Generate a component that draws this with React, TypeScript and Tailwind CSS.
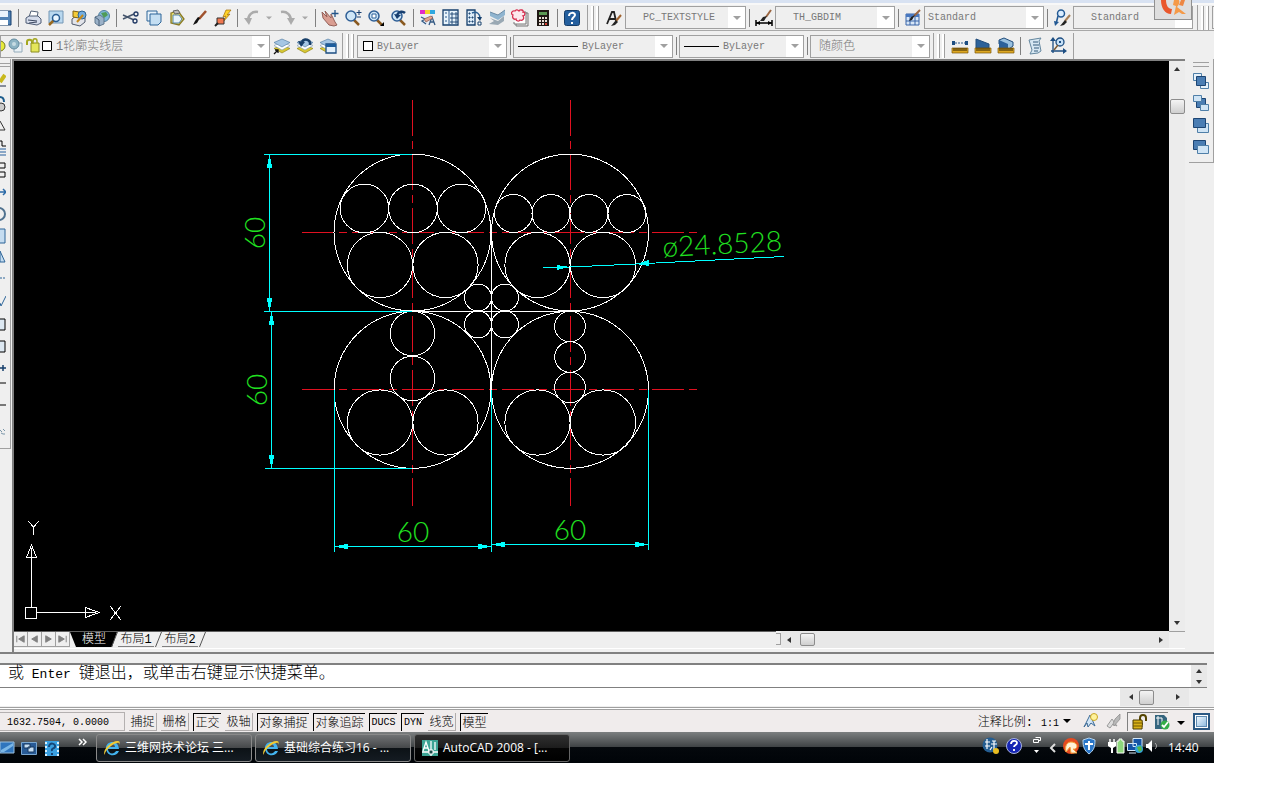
import type { ReactNode } from 'react';
import clsx from 'clsx';

const UI_FONT = "font-['Liberation_Mono','Noto_Sans_CJK_SC',monospace]";

function Glyph({ children }: { children: ReactNode }) {
    return (
        <svg width="18" height="18" viewBox="0 0 18 18" fill="none" className="shrink-0">
            {children}
        </svg>
    );
}

function ToolButton({ label, children }: { label: string; children: ReactNode }) {
    return (
        <button type="button" aria-label={label} className="flex h-6 w-[23px] shrink-0 items-center justify-center">
            <Glyph>{children}</Glyph>
        </button>
    );
}

function Separator() {
    return (
        <div className="flex w-1.5 shrink-0 justify-center">
            <div className="h-[18px] w-px bg-[#808080]" />
        </div>
    );
}

function Grip() {
    return (
        <div className="flex h-6 shrink-0 gap-0.5 px-[3px]">
            <div className="w-[3px] border-r border-[#a0a0a0] bg-white" />
            <div className="w-[3px] border-r border-[#a0a0a0] bg-white" />
        </div>
    );
}

function DownArrow({ className }: { className?: string }) {
    return (
        <svg width="8" height="4" viewBox="0 0 8 4" className={className}>
            <path d="M0 0h8L4 4z" fill="currentColor" />
        </svg>
    );
}

interface ComboProps {
    label: string;
    value: string;
    width: string;
    cjk?: boolean;
    pad?: string;
    children?: ReactNode;
}

function Combo({ label, value, width, cjk, pad = 'pl-1', children }: ComboProps) {
    return (
        <div className={clsx('flex h-[23px] shrink-0 items-center border border-[#a0a0a0] bg-[#efefef]', width)}>
            {children}
            <select
                aria-label={label}
                defaultValue={value}
                className={clsx(
                    'h-full min-w-0 flex-1 appearance-none bg-transparent text-[#787878] outline-none',
                    cjk ? 'pt-0.5 text-[12px] font-light' : 'text-[10px]',
                    pad
                )}
            >
                <option>{value}</option>
            </select>
            <div className="flex h-full w-[17px] items-center justify-center bg-white text-[#a0a0a0]">
                <DownArrow />
            </div>
        </div>
    );
}

function Magnifier() {
    return (
        <>
            <path d="M9 10l6 6" stroke="#8a5a20" strokeWidth="2.5" />
            <circle cx="7" cy="7" r="5" fill="#cfe6f7" stroke="#2f5f96" strokeWidth="1.5" />
        </>
    );
}

function Brush() {
    return (
        <>
            <path d="M8 10l7-8" stroke="#a0522d" strokeWidth="2.5" />
            <path d="M9 9l-3 5-4 2 2-4 3-4z" fill="#111" />
        </>
    );
}

function Layers() {
    return (
        <>
            <path d="M9 8l8 3.500L9 16l-8-4.500z" fill="#d8c832" stroke="#8a7a10" strokeWidth=".6" />
            <path d="M9 5l8 3.500L9 13 1 8.500z" fill="#fff" stroke="#7e9ab4" strokeWidth=".6" />
            <path d="M9 2l8 3.500L9 10 1 5.500z" fill="#a5c6e4" stroke="#48739c" strokeWidth=".6" />
        </>
    );
}

function StandardToolbar() {
    return (
        <div className="flex h-[26px] items-center overflow-hidden border-b border-[#a8a8a8]">
            <div className="-ml-2 flex shrink-0">
                <ToolButton label="保存">
                    <path d="M1 2h15v14H1z" fill="#4f82b5" stroke="#173f6c" />
                    <path d="M4 2h9v6H4z" fill="#e8f3fc" />
                    <path d="M5 11h8v5H5z" fill="#fff" />
                </ToolButton>
            </div>
            <Separator />
            <ToolButton label="打印">
                <path d="M5 8l2-6 7 1-1 6" fill="#fff" stroke="#566479" />
                <path d="M2 9l3-2h9l3 3v4l-4 2-11-2z" fill="#d5dceb" stroke="#4f5d75" />
                <path d="M4 11l9 1M5 14l8-1" stroke="#3c4860" />
            </ToolButton>
            <ToolButton label="打印预览">
                <path d="M2 2h14v12H2z" fill="#b9d8ef" stroke="#7497b5" />
                <path d="M7 11l-5 5" stroke="#9a6a20" strokeWidth="2.500" />
                <circle cx="9" cy="9" r="3.500" fill="#eaf6ff" stroke="#285c92" strokeWidth="1.500" />
            </ToolButton>
            <ToolButton label="发布">
                <path d="M2 10l4-3 9 2v4l-5 4-8-2z" fill="#e2e4ea" stroke="#505a6c" />
                <path d="M3 2l6 1v6l-6-1z" fill="#f4cb38" stroke="#806010" />
                <circle cx="12" cy="6" r="4" fill="#74aee0" stroke="#2d628f" />
                <path d="M7 13l6-7" stroke="#c88a18" strokeWidth="2" />
            </ToolButton>
            <ToolButton label="三维 DWF">
                <circle cx="11" cy="7" r="5.500" fill="#7fb8dc" stroke="#527f9f" />
                <path d="M8 4l5-1 2 3-4 3z" fill="#4f9b58" />
                <path d="M2 8l5-2 4 3v6l-5 2-4-3z" fill="#9bb2c9" stroke="#61788e" />
                <path d="M2 8l4 3v6" stroke="#4a6078" />
            </ToolButton>
            <Separator />
            <ToolButton label="剪切">
                <path d="M1 6l11 5M1 10l11-5" stroke="#44546c" strokeWidth="1.500" />
                <circle cx="14" cy="5" r="2" stroke="#203864" strokeWidth="1.300" />
                <circle cx="13" cy="12" r="2" stroke="#203864" strokeWidth="1.300" />
            </ToolButton>
            <ToolButton label="复制">
                <path d="M2 2h10v10H2z" fill="#e7f2fb" stroke="#2d6498" />
                <path d="M5 5h11v8l-3 3H5z" fill="#c4def2" stroke="#2d6498" />
            </ToolButton>
            <ToolButton label="粘贴">
                <path d="M3 4l7-2 6 8-5 6-8-2z" fill="#e6dc72" stroke="#8a7a24" strokeWidth="1.300" />
                <path d="M5 6h6l3 4-3 4H5z" fill="#e8f4fc" stroke="#5585aa" />
                <path d="M5 2l5-1 2 3-5 1z" fill="#bbb" stroke="#666" />
            </ToolButton>
            <ToolButton label="特性匹配">
                <Brush />
            </ToolButton>
            <ToolButton label="块编辑器">
                <path d="M12 1l-3 7 3-1-3 6 7-8-3 1 4-5z" fill="#ffd42a" stroke="#a46c00" strokeWidth=".7" />
                <path d="M3 9h7v6H3z" fill="#f07850" stroke="#333" />
                <path d="M1 17l3-3" stroke="#222" strokeWidth="2" />
            </ToolButton>
            <Separator />
            <ToolButton label="放弃">
                <path d="M15 3C9 2 5 6 5 12" stroke="#ababab" strokeWidth="2.500" />
                <path d="M1 9h8l-3 7z" fill="#ababab" />
            </ToolButton>
            <div className="flex w-3 shrink-0 justify-center text-[#a8a8a8]"><DownArrow className="w-1.5" /></div>
            <ToolButton label="重做">
                <path d="M3 3c6-1 10 3 10 9" stroke="#ababab" strokeWidth="2.500" />
                <path d="M17 9H9l4 7z" fill="#ababab" />
            </ToolButton>
            <div className="flex w-3.5 shrink-0 justify-center text-[#a8a8a8]"><DownArrow className="w-1.5" /></div>
            <Separator />
            <ToolButton label="实时平移">
                <path d="M1 3l5 5-2-6 6 7V5l4 8 2 3-3 1-5-1-6-7z" fill="#d99d91" stroke="#946058" />
                <path d="M14 1v7M10.500 4.500h7" stroke="#245488" strokeWidth="1.300" />
            </ToolButton>
            <ToolButton label="实时缩放">
                <Magnifier />
                <path d="M15 1v5M12.500 3.500h5M13 8h4" stroke="#173f70" />
            </ToolButton>
            <ToolButton label="窗口缩放">
                <Magnifier />
                <path d="M5 5h4v4H5z" fill="#fff" stroke="#2d639b" />
                <path d="M17 13v4h-4z" fill="#000" />
            </ToolButton>
            <ToolButton label="缩放上一个">
                <Magnifier />
                <path d="M15 4c-2-2-6-2-8 2" stroke="#173f70" strokeWidth="2.500" />
                <path d="M4 5l7 1-4 4z" fill="#173f70" />
            </ToolButton>
            <Separator />
            <ToolButton label="特性">
                <path d="M1 1h5v4H1z" fill="#e22ac8" />
                <path d="M6 1h5v4H6z" fill="#f4d428" />
                <path d="M11 1h5v4h-5z" fill="#30a8e0" />
                <path d="M2 7h9v9H2z" fill="#e8eef6" />
                <path d="M2 8l4 2-3 2 4 3M10 16l3-8 3 8m-5-3h4" stroke="#345a84" strokeWidth="1.300" />
                <path d="M5 10l7-3 2 2-7 4z" fill="#e3a58e" stroke="#8a584c" strokeWidth=".7" />
            </ToolButton>
            <ToolButton label="设计中心">
                <path d="M1 1h15v15H1z" fill="#e8f4fc" stroke="#17406d" strokeWidth="1.300" />
                <path d="M7 1v15M3 4h2M3 8h2M3 12h2" stroke="#28598e" />
                <path d="M9 4h2v2H9zM13 4h2v2h-2zM9 8h2v2H9zM13 8h2v2h-2zM9 12h2v2H9zM13 12h2v2h-2z" stroke="#17406d" strokeWidth=".9" />
            </ToolButton>
            <ToolButton label="工具选项板">
                <path d="M2 1h8v15H2z" fill="#dcebf8" stroke="#17406d" strokeWidth="1.300" />
                <path d="M4 4h1v1H4zM4 8h1v1H4zM4 12h1v1H4zM7 8h1v1H7zM7 12h1v1H7z" stroke="#17406d" />
                <path d="M7 4c5-2 8 1 8 5" stroke="#2a5f94" strokeWidth="1.500" />
                <path d="M12 8h5l-2 4z" fill="#17406d" />
                <path d="M13 13h3v3h-3z" fill="#fff" stroke="#17406d" />
            </ToolButton>
            <ToolButton label="图纸集管理器">
                <path d="M2 3l8 3 7-5v5l-7 5-8-4z" fill="#8fb4cf" />
                <path d="M2 9l8 3 6-5v5l-6 4-9-1 5-3z" fill="#9aa9b4" />
                <path d="M2 3l8 3 7-5" stroke="#6c8ba5" />
            </ToolButton>
            <ToolButton label="标记集管理器">
                <path d="M15 4h2v13H5v-2" fill="#e9e9e9" stroke="#777" />
                <path d="M13 3h2v12H3v-2" fill="#fff" stroke="#777" />
                <path d="M4 2c1-2 3-1 4 0 1-2 5-1 4 1 3 0 2 4 0 4 2 3-1 5-3 4-1 2-4 1-4-1-3 1-4-2-3-4-3-1-1-5 2-4z" fill="#fce8ed" stroke="#d72f50" strokeWidth="1.300" />
            </ToolButton>
            <ToolButton label="快速计算器">
                <path d="M3 1h12v16H3z" fill="#201814" />
                <path d="M5 3h8v3H5z" fill="#5c9954" />
                <path d="M5 8h2v2H5zm3 0h2v2H8zm3 0h2v2h-2zm-6 3h2v2H5zm3 0h2v2H8zm3 0h2v2h-2zm-6 3h2v2H5zm3 0h2v2H8z" fill="#e8dcd4" />
                <path d="M11 14h2v2h-2z" fill="#d63d30" />
            </ToolButton>
            <Separator />
            <ToolButton label="帮助">
                <rect x="1.500" y="1.500" width="15" height="15" rx="2" fill="#245f9e" stroke="#163d68" />
                <path d="M6 7c0-4 6-4 6-1 0 2-3 2-3 5M9 13v2" stroke="#fff" strokeWidth="2" />
            </ToolButton>
            <div className="ml-1 h-full w-px shrink-0 bg-[#a0a0a0]" />
            <Grip />
            <ToolButton label="文字样式">
                <path d="M2 15L7 3h2l2 9M4 10h6" stroke="#222" strokeWidth="1.800" />
                <path d="M11 12l5-6" stroke="#a0622d" strokeWidth="2" />
                <path d="M11 11l2 2-3 3-4 1z" fill="#222" />
            </ToolButton>
            <Combo label="文字样式控制" value="PC_TEXTSTYLE" width="w-[121px]" pad="pl-[17px]" />
            <Separator />
            <ToolButton label="标注样式">
                <path d="M1 11v6M17 11v6M1 14h16" stroke="#000" strokeWidth="1.500" />
                <path d="M1 14l4-2v4zM17 14l-4-2v4z" fill="#000" />
                <path d="M11 8l5-7" stroke="#9a6540" strokeWidth="2" />
                <path d="M12 7l-3 5-4 0 3-4z" fill="#222" />
            </ToolButton>
            <Combo label="标注样式控制" value="TH_GBDIM" width="w-[120px]" pad="pl-[17px]" />
            <Separator />
            <ToolButton label="表格样式">
                <path d="M2 5h13v11H2z" fill="#d7e6f7" stroke="#3864a8" />
                <path d="M2 5h13v3H2z" fill="#4878c0" />
                <path d="M2 12h13M6 8v8M11 8v8" stroke="#3864a8" />
                <path d="M10 7l6-6" stroke="#9a6540" strokeWidth="2" />
                <path d="M11 6l-3 5-3 1 2-4z" fill="#222" />
            </ToolButton>
            <Combo label="表格样式控制" value="Standard" width="w-[120px]" pad="pl-[3px]" />
            <Separator />
            <ToolButton label="多重引线样式">
                <circle cx="8" cy="4.500" r="3.500" fill="#dceeff" stroke="#245a94" strokeWidth="1.500" />
                <path d="M5 7l-2 8" stroke="#245a94" strokeWidth="1.500" />
                <path d="M1 12l5 1-4 4z" fill="#245a94" />
                <path d="M12 12l5-6" stroke="#a88058" strokeWidth="2" />
                <path d="M12 11l2 2-3 3-4 1z" fill="#222" />
            </ToolButton>
            <Combo label="多重引线样式控制" value="Standard" width="w-[120px]" pad="pl-[17px]" />
            <div className="ml-1 h-full w-px shrink-0 bg-[#a0a0a0]" />
            <Grip />
            <div className="h-[23px] flex-1 border-y border-l border-[#a0a0a0]" />
        </div>
    );
}

function Ruler() {
    return (
        <>
            <path d="M1 11h16v5H1z" fill="#dda824" stroke="#7b5808" strokeWidth=".7" />
            <path d="M3 11v3M5 11v3M7 11v3M9 11v3M11 11v3M13 11v3M15 11v3" stroke="#322200" />
        </>
    );
}

function LayerToolbar() {
    return (
        <div className="flex h-7 items-center pt-0.5">
            <Combo label="图层控制" value="1轮廓实线层" width="w-[270px]" cjk pad="pl-[3px]">
                <svg width="52" height="18" viewBox="0 0 52 18" fill="none" className="shrink-0">
                    <circle cx="-1" cy="9" r="5" fill="#e6ea3c" stroke="#777b22" />
                    <path d="M13 6h8v9h-8z" fill="#e9f1f6" stroke="#94abba" />
                    <circle cx="13" cy="7" r="5" fill="#8eb4c4" stroke="#628b9f" />
                    <circle cx="13" cy="7" r="2" fill="#c7dce3" />
                    <path d="M26 8V5c0-3 5-3 5 0v3" stroke="#a4a720" strokeWidth="2" />
                    <path d="M30 6h8v9h-8z" fill="#e4e65a" stroke="#8a8c20" />
                    <path d="M32 7V4c0-3 4-3 4 0v2" stroke="#a4a720" strokeWidth="1.500" />
                    <path d="M41.500 4.500h9v9h-9z" fill="#fff" stroke="#000" />
                </svg>
            </Combo>
            <ToolButton label="将对象的图层置为当前">
                <Layers />
                <path d="M1 17l4-4M2 13h3v3" stroke="#111" strokeWidth="1.300" />
            </ToolButton>
            <ToolButton label="上一个图层">
                <Layers />
                <path d="M14 8c1-6-6-7-8-3" stroke="#183f69" strokeWidth="2.500" />
                <path d="M2 4l7 1-4 5z" fill="#183f69" />
            </ToolButton>
            <ToolButton label="图层状态管理器">
                <Layers />
                <path d="M7 7h10v9H7z" fill="#e3f0fb" stroke="#1d4e82" strokeWidth="1.300" />
                <path d="M7 7h10v3H7z" fill="#1d5d9d" />
            </ToolButton>
            <div className="ml-[3px] h-full w-px shrink-0 bg-[#a0a0a0]" />
            <Grip />
            <Combo label="颜色控制" value="ByLayer" width="w-[150px]" pad="pl-1">
                <div className="ml-[5px] size-[10px] border border-black bg-white" />
            </Combo>
            <Separator />
            <Combo label="线型控制" value="ByLayer" width="w-[160px]" pad="pl-1">
                <div className="ml-1 h-px w-[60px] bg-black" />
            </Combo>
            <Separator />
            <Combo label="线宽控制" value="ByLayer" width="w-[125px]" pad="pl-1">
                <div className="ml-1 h-px w-[35px] bg-black" />
            </Combo>
            <Separator />
            <Combo label="打印样式控制" value="随颜色" width="w-[120px]" cjk pad="pl-2" />
            <div className="ml-[3px] h-full w-px shrink-0 bg-[#a0a0a0]" />
            <Grip />
            <ToolButton label="距离">
                <path d="M1 6h16" stroke="#2c598b" strokeDasharray="2 1" />
                <path d="M1 4h3v4H1zM14 4h3v4h-3z" fill="#1d4e82" />
                <Ruler />
            </ToolButton>
            <ToolButton label="面积">
                <path d="M2 2l13 5v4H2z" fill="#2c6199" stroke="#204c7b" />
                <Ruler />
            </ToolButton>
            <ToolButton label="面域/质量特性">
                <path d="M2 3l5-2 9 4v4l-4 3-10-5z" fill="#9ac1df" stroke="#204c7b" />
                <path d="M2 3l9 4v5H2z" fill="#2c6199" />
                <Ruler />
            </ToolButton>
            <Separator />
            <ToolButton label="列表">
                <path d="M3 3l12-2-2 3 2 10-3 2-8 1 2-4z" fill="#d7e7f2" stroke="#64879f" />
                <path d="M7 5h5M7 8h6M8 11h5M8 14h4" stroke="#345a7b" />
            </ToolButton>
            <ToolButton label="定位点">
                <path d="M4 16V3M2 14h13" stroke="#1d4e82" strokeWidth="1.300" />
                <path d="M1 4l3-4 3 4zM14 11l4 3-4 3z" fill="#1d4e82" />
                <circle cx="11" cy="5" r="4" fill="#c7e1f7" stroke="#1d4e82" strokeWidth="1.300" />
                <path d="M9 8l-4 5" stroke="#7c5a33" strokeWidth="1.500" />
                <path d="M10 4h2v2h-2z" fill="#1d4e82" />
            </ToolButton>
            <div className="ml-1 h-full w-px shrink-0 bg-[#a0a0a0]" />
        </div>
    );
}

const MODIFY_TOOLS: { label: string; art: ReactNode }[] = [
    { label: '删除', art: <><path d="M0 10l5-7" stroke="#c8b81c" strokeWidth="4" /><path d="M0 14h6" stroke="#1c2848" /></> },
    { label: '复制', art: <><path d="M0 3c3 0 4 2 4 5" stroke="#1d5d8d" strokeWidth="2" /><circle cx="1" cy="13" r="4" fill="#ccc" stroke="#333" /></> },
    { label: '镜像', art: <path d="M0 5l5 9H0" stroke="#333" /> },
    { label: '偏移', art: <><path d="M0 3h2v5h4" stroke="#000" /><path d="M0 11h6M0 14h6M0 17h6" stroke="#245f9e" /></> },
    { label: '阵列', art: <path d="M0 3h5v5H0M0 12h5v5H0" stroke="#000" /> },
    { label: '移动', art: <path d="M0 10h6M3 7l3 3-3 3" stroke="#2c6ba8" strokeWidth="1.500" /> },
    { label: '旋转', art: <circle cx="-1" cy="10" r="6" stroke="#50728f" strokeWidth="2" /> },
    { label: '缩放', art: <path d="M-1 3h6v14h-6z" fill="#c5dcf0" stroke="#2d6498" /> },
    { label: '拉伸', art: <path d="M0 3l5 11h-5z" fill="#c5dcf0" stroke="#2d6498" /> },
    { label: '修剪', art: <path d="M0 8h6" stroke="#2d6498" strokeDasharray="2 1" /> },
    { label: '延伸', art: <path d="M0 11l1 3 5-10" stroke="#2d6498" /> },
    { label: '打断于点', art: <path d="M-1 5h6v11h-6z" fill="#dce8f2" stroke="#000" /> },
    { label: '打断', art: <path d="M-1 5h6v11h-6z" fill="#dce8f2" stroke="#000" /> },
    { label: '合并', art: <path d="M0 10h6M3 7v6" stroke="#173f6c" strokeWidth="1.500" /> },
    { label: '倒角', art: <path d="M0 3h6" stroke="#000" /> },
    { label: '圆角', art: <path d="M0 3h6" stroke="#000" /> },
    { label: '分解', art: <path d="M0 6l2 2M3 5l2 2M1 9l2 1M4 9v2" stroke="#7995a8" /> },
];

function ModifyToolbar() {
    return (
        <div className="w-3 shrink-0 bg-[#efefef]">
            <div className="h-[390px] w-[11px] overflow-hidden border-r border-b border-[#a0a0a0]">
                <div className="my-1 flex flex-col gap-[2px]">
                    <div className="h-px bg-[#a0a0a0]" />
                    <div className="h-px bg-[#a0a0a0]" />
                </div>
                {MODIFY_TOOLS.map((tool) => (
                    <button key={tool.label} type="button" aria-label={tool.label} className="block h-[22px] w-2">
                        <svg width="6" height="20" viewBox="0 0 6 20" fill="none">{tool.art}</svg>
                    </button>
                ))}
            </div>
        </div>
    );
}

function DrawOrderToolbar() {
    return (
        <div className="ml-1 w-[25px] shrink-0">
            <div className="h-[104px] border-r border-b border-[#a0a0a0]">
                <div className="mx-1 flex flex-col gap-[3px] pt-[3px] pb-[3px]">
                    <div className="h-px bg-[#a0a0a0]" />
                    <div className="h-px bg-[#a0a0a0]" />
                </div>
                <div className="flex flex-col">
                    <button type="button" aria-label="前置" className="flex h-[22px] items-center justify-center">
                        <Glyph>
                            <path d="M1.500 1.500h8v7h-8zM8.500 10.500h8v6h-8z" fill="#e6f1fa" stroke="#4f7fa8" />
                            <path d="M4.500 4.500h9v9h-9z" fill="#4a7db3" stroke="#1d4573" />
                        </Glyph>
                    </button>
                    <button type="button" aria-label="后置" className="flex h-[22px] items-center justify-center">
                        <Glyph>
                            <path d="M4.500 4.500h9v9h-9z" fill="#4a7db3" stroke="#1d4573" />
                            <path d="M1.500 1.500h8v6h-8zM8.500 10.500h8v6h-8z" fill="#cfe4f5" stroke="#4f7fa8" />
                        </Glyph>
                    </button>
                    <button type="button" aria-label="置于对象之上" className="flex h-[22px] items-center justify-center">
                        <Glyph>
                            <path d="M5.500 7.500h11v9h-11z" fill="#cfe4f5" stroke="#4f7fa8" />
                            <path d="M1.500 2.500h12v9h-12z" fill="#4a7db3" stroke="#1d4573" />
                        </Glyph>
                    </button>
                    <button type="button" aria-label="置于对象之下" className="flex h-[22px] items-center justify-center">
                        <Glyph>
                            <path d="M1.500 2.500h12v9h-12z" fill="#4a7db3" stroke="#1d4573" />
                            <path d="M5.500 7.500h11v8h-11z" fill="#cfe4f5" stroke="#4f7fa8" />
                        </Glyph>
                    </button>
                </div>
            </div>
        </div>
    );
}

// cx, cy, r
const CIRCLES = [
    [412.5, 232.5, 78.5], [570, 232.5, 78.5], [412.5, 389.8, 78.5], [570, 389.8, 78.5],
    [364.5, 208.5, 24.3], [413, 208.5, 24.3], [461.5, 208.5, 24.3],
    [380, 265, 32.6], [445.5, 265, 32.6],
    [513.5, 213.5, 19], [551, 213.5, 19], [589, 213.5, 19], [627, 213.5, 19],
    [537.5, 265, 32.6], [603, 265, 32.6],
    [478, 297.5, 13.5], [505, 297.5, 13.5], [478, 324.5, 13.5], [505, 324.5, 13.5],
    [412.5, 333.5, 22.3], [412.5, 378.5, 22.3],
    [380, 422.5, 32.6], [445.5, 422.5, 32.6],
    [570, 326.5, 15.3], [570, 357, 15.3], [570, 387.5, 15.3],
    [537.5, 422.5, 32.6], [603, 422.5, 32.6],
];

function Drawing() {
    return (
        <svg className="min-h-0 w-full flex-1 bg-black" fill="none" role="img" aria-label="图形">
            <g transform="translate(-14 -61)" shapeRendering="crispEdges">
                <g stroke="#e01020">
                    <path d="M412.500 100V506M570.500 100V506" strokeDasharray="36 5 8 5" />
                    <path d="M302 232.500H699M302 389.500H699" strokeDasharray="32 5 8 5" />
                </g>
                <g stroke="#fff">
                    {CIRCLES.map(([cx, cy, r]) => (
                        <circle key={`${cx}-${cy}`} cx={cx} cy={cy} r={r} />
                    ))}
                    <path d="M491.500 232V390M412 311.500H570" />
                </g>
                <g stroke="#00ffff">
                    <path d="M264 154.500H412M264 311.500H412M265 468.500H412M269.500 155V311M271.500 311V468" />
                    <path d="M334.500 390V552M491.500 390V552M648.500 390V550M334 546.500H491M491 544.500H648" />
                    <path d="M543 267.500L570 267 636 264 784 256.500" />
                </g>
                <g fill="#00ffff">
                    <path d="M269.500 155l3 13h-6zM269.500 311l3-13h-6zM271.500 312l3 13h-6zM271.500 468l3-13h-6z" />
                    <path d="M335 546.500l13-3v6zM491 546.500l-13-3v6zM492 544.500l13-3v6zM648 544.500l-13-3v6z" />
                    <path d="M570 267l-13-2v5zM636 264l13-4v6z" />
                </g>
                <g fill="#20e020" className="font-['Lato',sans-serif] text-[28px] font-light">
                    <text x="413" y="542" textAnchor="middle">60</text>
                    <text x="570" y="540" textAnchor="middle">60</text>
                    <text transform="translate(265 233) rotate(-90)" textAnchor="middle">60</text>
                    <text transform="translate(267 390) rotate(-90)" textAnchor="middle">60</text>
                    <text transform="translate(663 257) rotate(-3)">ø24.8528</text>
                </g>
                <g stroke="#fff">
                    <path d="M25.500 607.500h11v11h-11zM31.500 607V558M37 612.500H85" />
                    <path d="M31.500 545l5 12.500h-10zM99 612.500l-13.500-5v10zM31.500 548v9M96 612.500H86" />
                    <path d="M28 521l5.500 6 5.500-6M33.500 527v8M110 606l11 14M121 606l-11 14" />
                </g>
            </g>
        </svg>
    );
}

function ScrollArrow({ label, dir }: { label: string; dir: 'up' | 'down' | 'left' | 'right' }) {
    const shapes = { up: 'M1 6l3-4 3 4z', down: 'M1 2l3 4 3-4z', left: 'M6 1L2 4l4 3z', right: 'M2 1l4 3-4 3z' };
    return (
        <button type="button" aria-label={label} className="flex size-4 shrink-0 items-center justify-center">
            <svg width="8" height="8" viewBox="0 0 8 8"><path d={shapes[dir]} fill="#333" /></svg>
        </button>
    );
}

const THUMB = 'shrink-0 rounded-xs border border-[#8c8c8c] bg-linear-to-b from-[#f4f4f4] to-[#cfcfcf]';

function Slash({ active }: { active?: boolean }) {
    return (
        <svg width="8" height="15" viewBox="0 0 8 15" fill="none" className="shrink-0">
            {active && <path d="M0 0h7L2 15H0z" fill="#000" />}
            <path d="M7.500 0L1.500 15" stroke="#555" />
        </svg>
    );
}

function LayoutTabs() {
    const nav = ['M3 3v7M11 3v7L5 6.500z', 'M10 3v7L4 6.500z', 'M4 3v7l6-3.500z', 'M3 3v7l6-3.500zM11 3v7'];
    const names = ['第一个', '上一个', '下一个', '最后一个'];
    const tab = 'h-[15px] shrink-0 text-[12px] leading-[17px] font-light';
    return (
        <div className="flex h-[17px] shrink-0 bg-[#efefef]">
            <div className="flex w-[66%] items-start border-t border-[#606060]">
                {nav.map((d, i) => (
                    <button key={d} type="button" aria-label={names[i]} className="h-[15px] w-3.5 shrink-0 border-r border-b border-[#a0a0a0]">
                        <svg width="13" height="13" viewBox="0 0 14 14"><path d={d} fill="#808080" stroke="#808080" /></svg>
                    </button>
                ))}
                <svg width="8" height="15" viewBox="0 0 8 15" className="shrink-0"><path d="M0 0h8v15H6z" fill="#000" /></svg>
                <button type="button" className={clsx(tab, 'w-8 bg-black text-white')}>模型</button>
                <Slash active />
                <button type="button" className={clsx(tab, 'w-9 border-b border-[#808080] text-black')}>布局1</button>
                <Slash />
                <button type="button" className={clsx(tab, 'w-9 border-b border-[#808080] text-black')}>布局2</button>
                <Slash />
            </div>
            <div className="mt-0.5 h-3 w-[5px] shrink-0 border-y border-r border-[#a0a0a0]" />
            <div className="flex flex-1 items-center bg-[#e8e8e8]">
                <ScrollArrow label="向左滚动" dir="left" />
                <div className={clsx(THUMB, 'ml-[3px] h-[13px] w-[15px]')} />
                <div className="ml-auto flex"><ScrollArrow label="向右滚动" dir="right" /></div>
            </div>
        </div>
    );
}

function CommandLine() {
    return (
        <div className="shrink-0 border-t-2 border-[#808080] bg-[#efefef] pt-[9px]">
            <div className="mr-[7px] flex h-[25px] border-t-2 border-b border-[#808080] bg-white">
                <p className="flex-1 pl-2 text-[16px] leading-[18px] font-light text-black">
                    或<span className="whitespace-pre text-[13px]"> Enter </span>键退出，或单击右键显示快捷菜单。
                </p>
                <div className="flex w-4 flex-col justify-between overflow-hidden bg-[#e8e8e8]">
                    <div className="flex h-[11px] items-center"><ScrollArrow label="向上滚动" dir="up" /></div>
                    <div className="flex h-[11px] items-center"><ScrollArrow label="向下滚动" dir="down" /></div>
                </div>
            </div>
            <div className="mr-[25px] flex h-[18px]">
                <input aria-label="命令" className="min-w-0 flex-1 bg-white px-2 text-[13px] outline-none" />
                <div className="flex w-[69px] items-center bg-[#e8e8e8] px-[3px]">
                    <ScrollArrow label="命令行向左" dir="left" />
                    <div className={clsx(THUMB, 'size-[15px]')} />
                    <div className="ml-auto"><ScrollArrow label="命令行向右" dir="right" /></div>
                </div>
            </div>
            <div className="mt-px h-[3px] border-y border-[#a0a0a0] bg-white" />
        </div>
    );
}

const MODES = [
    { name: '捕捉', on: false, width: 'w-7' },
    { name: '栅格', on: false, width: 'w-7' },
    { name: '正交', on: true, width: 'w-7' },
    { name: '极轴', on: false, width: 'w-7' },
    { name: '对象捕捉', on: true, width: 'w-[52px]' },
    { name: '对象追踪', on: true, width: 'w-[52px]' },
    { name: 'DUCS', on: true, width: 'w-7' },
    { name: 'DYN', on: true, width: 'w-[23px]' },
    { name: '线宽', on: false, width: 'w-7' },
    { name: '模型', on: true, width: 'w-7' },
];

function StatusBar() {
    return (
        <div className="flex h-[22px] shrink-0 items-center bg-[#f0ecec] text-black">
            <output aria-label="光标坐标" className="h-[19px] w-[125px] border border-l-0 border-[#b4b0b0] pl-[7px] text-[10px] leading-5">
                1632.7504, 0.0000
            </output>
            <div className="flex items-end gap-1 self-end pb-px pl-1">
                {MODES.map((mode) => (
                    <button
                        key={mode.name}
                        type="button"
                        aria-pressed={mode.on}
                        className={clsx(
                            'h-[18px] shrink-0 whitespace-nowrap',
                            mode.width,
                            /^[A-Z]/.test(mode.name) ? 'text-[10px] leading-[18px]' : 'text-[12px] leading-5 font-light',
                            mode.on ? 'border-t border-l border-black' : 'border-r border-b border-[#b0acac]'
                        )}
                    >
                        {mode.name}
                    </button>
                ))}
            </div>
            <div className="ml-auto flex items-center pr-1">
                <label htmlFor="annotation-scale" className="pt-1 text-[12px] font-light">注释比例:</label>
                <select id="annotation-scale" defaultValue="1:1" className="ml-1 w-[26px] appearance-none bg-transparent pt-1 pl-1 text-[10px] outline-none">
                    <option>1:1</option>
                </select>
                <DownArrow />
                <div className="ml-2 flex">
                    <ToolButton label="注释可见性">
                        <path d="M2 15l6-12 5 11-4-3-3 4-1-4z" fill="#d1e5f6" stroke="#3c6a96" />
                        <circle cx="12" cy="5" r="3.500" fill="#fff29a" stroke="#c9a524" />
                    </ToolButton>
                    <ToolButton label="自动添加比例">
                        <path d="M2 14l5-7 5 7-4-2-3 4z" fill="#ddd" stroke="#999" />
                        <path d="M15 2l-5 5-2 5 1 2 6-7z" fill="#b8b8b8" stroke="#888" strokeWidth=".7" />
                    </ToolButton>
                </div>
                <div className="ml-0.5 flex h-[19px] w-[41px] items-center border-t border-l border-[#808080]">
                    <ToolButton label="锁定工具栏">
                        <path d="M9 8V5c0-4 6-4 6 0v3" stroke="#554400" strokeWidth="2" />
                        <path d="M2 7h9c1 4 0 7 0 9H2z" fill="#d9b118" stroke="#4c3c00" />
                        <path d="M2 10h9M2 13h9" stroke="#715700" />
                    </ToolButton>
                    <ToolButton label="图形特性">
                        <path d="M1 2h9l3 3v11H1z" fill="#35657e" />
                        <path d="M4 3v9M2 5h6M8 5v5" stroke="#fff" />
                        <circle cx="11" cy="12" r="4.500" fill="#34ae48" />
                        <path d="M8 12l2 2 4-5" stroke="#fff" strokeWidth="1.800" />
                    </ToolButton>
                </div>
                <button type="button" aria-label="状态栏菜单" className="ml-[9px] pt-1"><DownArrow /></button>
                <button type="button" aria-label="全屏显示" className="ml-2 flex size-[17px] items-center justify-center border-2 border-[#2a5782] bg-white">
                    <span className="size-[11px] border border-[#5e8ab2] bg-linear-to-br from-[#edf6fd] to-[#91bce0]" />
                </button>
            </div>
        </div>
    );
}

function IEIcon() {
    return (
        <Glyph>
            <path d="M14 10H5c0 5 6 6 8 2h3c-3 7-13 5-13-3 0-7 12-9 13 1zM6 8h6c0-4-6-4-6 0z" fill="#43b4f0" />
            <path d="M2 16C-2 12 9 1 15 2c3 0 1 4 1 4s1-3-2-2C9 5 1 12 2 16z" fill="#f1ca35" />
        </Glyph>
    );
}

function AutoCADIcon() {
    return (
        <Glyph>
            <path d="M1 1h16v16H1z" fill="#3da595" />
            <path d="M2 12l3-9 3 9M3 9h4M10 2v15M1 13h16M14 3v8" stroke="#fff" strokeWidth="1.300" />
            <path d="M8 11h4v4H8z" fill="#174b48" stroke="#fff" />
        </Glyph>
    );
}

function TaskButton({ title, icon, active }: { title: string; icon: ReactNode; active?: boolean }) {
    return (
        <button
            type="button"
            className={clsx(
                'flex h-[28px] w-[156px] shrink-0 items-center gap-1 overflow-hidden rounded-[3px] border pl-1.5 text-white',
                "whitespace-nowrap font-['Open_Sans','Noto_Sans_CJK_SC',sans-serif] text-[12px]",
                active
                    ? 'border-[#666] bg-[linear-gradient(#303030,#1c1c1c_50%,#050505_50%,#000)]'
                    : 'border-[#8a8a8a] bg-[linear-gradient(#707274,#45484a_50%,#0c1216_50%,#141b22)]'
            )}
        >
            {icon}
            {title}
        </button>
    );
}

function Taskbar() {
    return (
        <div className="flex h-[31px] shrink-0 items-center bg-[linear-gradient(#7c7f80,#3c4042_50%,#04080c_50%,#000408)] text-white">
            <div className="flex gap-[5px]">
                <button type="button" aria-label="显示桌面" className="w-[15px]">
                    <svg width="15" height="18" viewBox="0 0 15 18">
                        <path d="M0 3h14v11H0z" fill="#2f75bd" stroke="#9cc1df" />
                        <path d="M1 11L13 4v3L4 13H1z" fill="#7bb7e6" />
                    </svg>
                </button>
                <button type="button" aria-label="切换窗口">
                    <Glyph>
                        <path d="M1.500 3.500h15v12h-15z" fill="#285b97" stroke="#7aa7d0" />
                        <path d="M4 5h6v4H4zM8 8h6v5H8z" fill="#c5def3" stroke="#173860" />
                    </Glyph>
                </button>
                <button type="button" aria-label="媒体播放器">
                    <Glyph>
                        <path d="M2 2h14v15H2z" fill="#399fe0" />
                        <path d="M3 3v14M15 3v14" stroke="#d5efff" strokeDasharray="2 2" strokeWidth="2" />
                        <path d="M6 8c0-5 7-4 6 0-1 2-4 1-3 4M9 14v2" stroke="#164779" strokeWidth="2" />
                    </Glyph>
                </button>
            </div>
            <button type="button" aria-label="更多快速启动" className="ml-[17px] self-start">
                <svg width="9" height="18" viewBox="0 0 9 18" fill="none"><path d="M1 7l3 3-3 3M5 7l3 3-3 3" stroke="#fff" strokeWidth="1.500" /></svg>
            </button>
            <div className="ml-[9px] flex gap-[3px]">
                <TaskButton title="三维网技术论坛 三..." icon={<IEIcon />} />
                <TaskButton title="基础综合练习16 - ..." icon={<IEIcon />} />
                <TaskButton title="AutoCAD 2008 - [..." icon={<AutoCADIcon />} active />
            </div>
            <div className="mb-1 ml-auto flex items-center pr-[13px]">
                <ToolButton label="输入法">
                    <circle cx="8" cy="8" r="7.500" fill="#245d91" />
                    <path d="M3 5h5M5 2v10M3 9h5M10 4h4M9 7h6M12 4v9M10 10l-2 3" stroke="#fff" strokeWidth="1.200" />
                    <circle cx="14" cy="14" r="3" fill="#e8bd22" />
                </ToolButton>
                <ToolButton label="帮助提示">
                    <circle cx="9" cy="9" r="7.500" fill="#1525b4" stroke="#aab4dd" />
                    <path d="M6 7c0-4 6-4 6-1 0 2-3 2-3 4M9 12v2" stroke="#fff" strokeWidth="1.800" />
                </ToolButton>
                <ToolButton label="语言栏选项">
                    <path d="M5.500 2.500h5v3h-5zM7.500 .5h5v3h-2" stroke="#fff" />
                    <path d="M6 13h5l-2.500 3z" fill="#fff" />
                </ToolButton>
                <button type="button" aria-label="显示隐藏的图标" className="mt-1 w-3">
                    <svg width="10" height="10" viewBox="0 0 10 10" fill="none"><path d="M7 1L3 5l4 4" stroke="#ddd" strokeWidth="2" /></svg>
                </button>
                <div className="flex">
                    <button type="button" aria-label="下载工具" className="ml-0.5">
                        <Glyph>
                            <circle cx="9" cy="9" r="8" fill="#e64a20" />
                            <path d="M4 15c-2-8 3-12 9-9 4 3 1 7-2 6l4 4H9l-1-6z" fill="#fff1d9" stroke="#f2a23a" />
                        </Glyph>
                    </button>
                    <button type="button" aria-label="安全防护" className="mr-[10px]">
                        <Glyph>
                            <path d="M9 1l6 2c0 7-1 10-6 14C4 13 3 10 3 3z" fill="#2a76c8" stroke="#b4d5f0" />
                            <path d="M9 4v9M5 7h8" stroke="#fff" strokeWidth="2" />
                        </Glyph>
                    </button>
                    <button type="button" aria-label="电源">
                        <Glyph>
                            <path d="M9 4h2V2h3v2h2v12H9z" fill="#8ed77d" stroke="#fff" />
                            <path d="M2 2v3M6 2v3" stroke="#fff" strokeWidth="1.500" />
                            <path d="M0 5h8v4l-3 2v5H3v-5L0 9z" fill="#fff" />
                        </Glyph>
                    </button>
                    <button type="button" aria-label="网络">
                        <Glyph>
                            <path d="M7 1.500h9v8H7zM1.500 6.500h9v7h-9zM3 16h7" fill="#1554a5" stroke="#d5e9fa" />
                            <circle cx="13" cy="12" r="4" fill="#34a4d5" />
                            <path d="M11 10l4-1 1 4-3 2z" fill="#59b748" />
                        </Glyph>
                    </button>
                    <button type="button" aria-label="音量">
                        <Glyph>
                            <path d="M2 7h2l4-4v12l-4-4H2z" fill="#fff" />
                            <path d="M11 6c2 2 2 4 0 6" stroke="#bbb" />
                        </Glyph>
                    </button>
                </div>
                <time className="mt-1 ml-1.5 w-[33px] font-['Open_Sans',sans-serif] text-[12px]">14:40</time>
            </div>
        </div>
    );
}

export default function App() {
    return (
        <div className="flex min-h-screen bg-white pr-[66px] pb-[37px]">
            <div className={clsx('relative flex min-w-0 flex-1 flex-col overflow-hidden bg-[#efefef]', UI_FONT)}>
                <div className="h-[5px] shrink-0 border-b-2 border-[#f8f8f8] bg-[#d8e2f2]" />
                <StandardToolbar />
                <LayerToolbar />
                <div className="flex min-h-[400px] flex-1">
                    <ModifyToolbar />
                    <div className="flex min-w-0 flex-1 flex-col border-t-2 border-l-2 border-[#808080]">
                        <div className="flex min-h-0 flex-1">
                            <div className="flex min-w-0 flex-1 flex-col"><Drawing /></div>
                            <div className="flex w-4 shrink-0 flex-col items-center bg-[#ececec]">
                                <ScrollArrow label="向上滚动视图" dir="up" />
                                <div className={clsx(THUMB, 'mt-[22px] h-[15px] w-[15px]')} />
                                <div className="mt-auto flex"><ScrollArrow label="向下滚动视图" dir="down" /></div>
                            </div>
                        </div>
                        <div className="flex">
                            <div className="min-w-0 flex-1"><LayoutTabs /></div>
                            <div className="w-4 border-t border-[#a0a0a0]" />
                        </div>
                        <div className="h-1 border-t border-white" />
                    </div>
                    <DrawOrderToolbar />
                </div>
                <CommandLine />
                <StatusBar />
                <Taskbar />
                <div className="absolute top-0 right-[22px] flex h-5 w-[38px] items-end justify-center overflow-hidden border border-t-0 border-[#909090] bg-[#dedede]">
                    <svg width="32" height="19" viewBox="0 0 32 19">
                        <path d="M4 0c0 8 4 14 10 14l1-5c-4 0-6-4-6-9z" fill="#e9572c" />
                        <path d="M17 0h5c1 2 0 5-2 7l9 7h-4l-3-2-5 3 2-9-3-1z" fill="#f59a48" />
                        <path d="M24 0h4l-2 6-4-1z" fill="#ed8642" />
                    </svg>
                </div>
            </div>
        </div>
    );
}
